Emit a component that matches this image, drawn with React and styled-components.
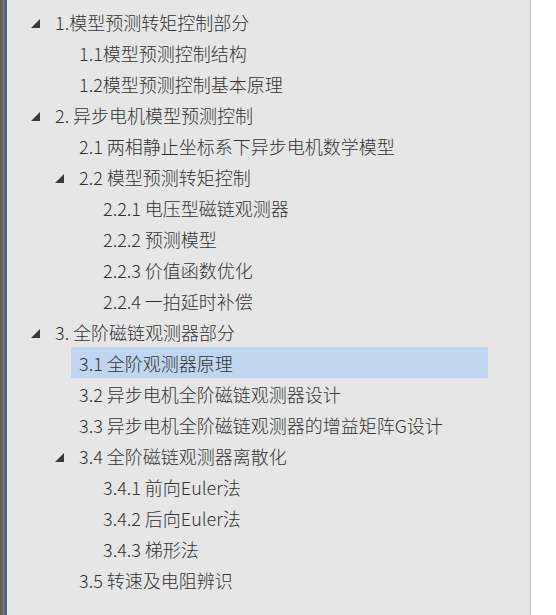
import React from 'react';
import styled, {createGlobalStyle} from 'styled-components';

const GlobalStyle = createGlobalStyle`
  html, body {
    margin: 0;
    padding: 0;
    background: #ffffff;
  }
`;

const Page = styled.div`
  display: flex;
  width: 556px;
  height: 615px;
  overflow: hidden;
`;

const EdgeStrip = styled.div`
  width: 5px;
  flex: none;
  background: linear-gradient(to right, #5c5a5e, #7a7470);
  border-right: 2px solid #4a5b8c;
`;

const TreePanel = styled.div`
  width: 524px;
  flex: none;
  background: #e6e6e6;
  border-right: 1px solid #bdbdbd;
  padding-top: 6px;
  box-sizing: border-box;
  font-family: "Noto Sans CJK SC", "Noto Sans", sans-serif;
  font-size: 18px;
  font-weight: 300;
  color: #333333;
`;

const Row = styled.div`
  display: flex;
  align-items: center;
  height: 31px;
  padding-left: ${({level}) => 16 + level * 24}px;
`;

const Expander = styled.span`
  width: 24px;
  height: 31px;
  flex: none;
  display: flex;
  align-items: center;
  justify-content: center;
  padding-top: 3px;
  box-sizing: border-box;
`;

const Label = styled.span`
  display: flex;
  align-items: center;
  height: 31px;
  padding: 0 8px;
  white-space: nowrap;
  box-sizing: border-box;
  background: ${({selected}) => (selected ? '#c0d5f0' : 'transparent')};
  min-width: ${({selected}) => (selected ? '417px' : '0')};
`;

const Arrow = () => (
  <svg width="11" height="11" viewBox="0 0 11 11">
    <path d="M10 1 L10 10 L1 10 Z" fill="#3a3a3a" />
  </svg>
);

const items = [
  {level: 0, text: '1.模型预测转矩控制部分', open: true},
  {level: 1, text: '1.1模型预测控制结构'},
  {level: 1, text: '1.2模型预测控制基本原理'},
  {level: 0, text: '2. 异步电机模型预测控制', open: true},
  {level: 1, text: '2.1 两相静止坐标系下异步电机数学模型'},
  {level: 1, text: '2.2 模型预测转矩控制', open: true},
  {level: 2, text: '2.2.1 电压型磁链观测器'},
  {level: 2, text: '2.2.2 预测模型'},
  {level: 2, text: '2.2.3 价值函数优化'},
  {level: 2, text: '2.2.4 一拍延时补偿'},
  {level: 0, text: '3. 全阶磁链观测器部分', open: true},
  {level: 1, text: '3.1 全阶观测器原理', selected: true},
  {level: 1, text: '3.2 异步电机全阶磁链观测器设计'},
  {level: 1, text: '3.3 异步电机全阶磁链观测器的增益矩阵G设计'},
  {level: 1, text: '3.4 全阶磁链观测器离散化', open: true},
  {level: 2, text: '3.4.1 前向Euler法'},
  {level: 2, text: '3.4.2 后向Euler法'},
  {level: 2, text: '3.4.3 梯形法'},
  {level: 1, text: '3.5 转速及电阻辨识'},
];

export default function App() {
  return (
    <>
      <GlobalStyle />
      <Page>
        <EdgeStrip />
        <TreePanel>
          {items.map((item, i) => (
            <Row key={i} level={item.level}>
              <Expander>{item.open && <Arrow />}</Expander>
              <Label selected={item.selected}>{item.text}</Label>
            </Row>
          ))}
        </TreePanel>
      </Page>
    </>
  );
}
